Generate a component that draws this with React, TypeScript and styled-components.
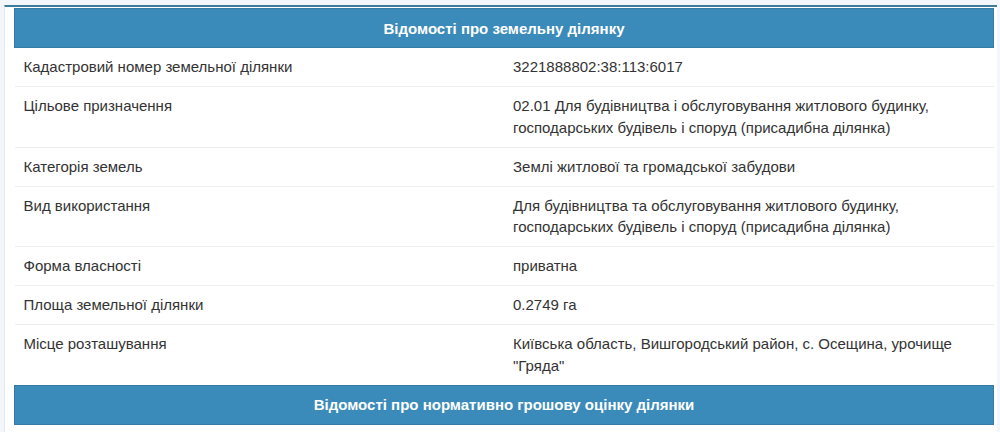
import React from "react";
import styled, { createGlobalStyle } from "styled-components";

const GlobalStyle = createGlobalStyle`
  html, body {
    margin: 0;
    padding: 0;
    background: #ffffff;
    font-family: "Liberation Sans", Arial, sans-serif;
  }
`;

const Page = styled.div`
  padding-top: 5px;
  background: #f3f6fa;
  width: 1000px;
  height: 432px;
  overflow: hidden;
`;

const Panel = styled.div`
  margin: 0 3px 0 4px;
  border-top: 2px solid #3d7d9c;
  border-left: 1px solid #e6e9ec;
  background: #ffffff;
  padding: 1px 3px 0 9px;
  height: 100%;
`;

const Table = styled.table`
  width: 100%;
  border-collapse: collapse;
  color: #333333;
  font-size: 15px;
`;

const HeadCell = styled.th`
  background: #3b8bba;
  border: 1px solid #357ca5;
  color: #ffffff;
  font-weight: bold;
  font-size: 15px;
  height: 38px;
  padding: 0 8px;
  text-align: center;
`;

const Row = styled.tr`
  border-bottom: 1px solid #eeeeee;
`;

const Cell = styled.td`
  width: 50%;
  padding: 8px 8px 8.5px 9px;
  line-height: 21.5px;
  vertical-align: top;
`;

const rows: [string, string][] = [
  ["Кадастровий номер земельної ділянки", "3221888802:38:113:6017"],
  [
    "Цільове призначення",
    "02.01 Для будівництва і обслуговування житлового будинку, господарських будівель і споруд (присадибна ділянка)",
  ],
  ["Категорія земель", "Землі житлової та громадської забудови"],
  [
    "Вид використання",
    "Для будівництва та обслуговування житлового будинку, господарських будівель і споруд (присадибна ділянка)",
  ],
  ["Форма власності", "приватна"],
  ["Площа земельної ділянки", "0.2749 га"],
  ["Місце розташування", "Київська область, Вишгородський район, с. Осещина, урочище \"Гряда\""],
];

export default function App() {
  return (
    <Page>
      <GlobalStyle />
      <Panel>
        <Table>
          <tbody>
            <tr>
              <HeadCell colSpan={2}>Відомості про земельну ділянку</HeadCell>
            </tr>
            {rows.map(([k, v]) => (
              <Row key={k}>
                <Cell>{k}</Cell>
                <Cell>{v}</Cell>
              </Row>
            ))}
            <tr>
              <HeadCell colSpan={2}>Відомості про нормативно грошову оцінку ділянки</HeadCell>
            </tr>
          </tbody>
        </Table>
      </Panel>
    </Page>
  );
}
